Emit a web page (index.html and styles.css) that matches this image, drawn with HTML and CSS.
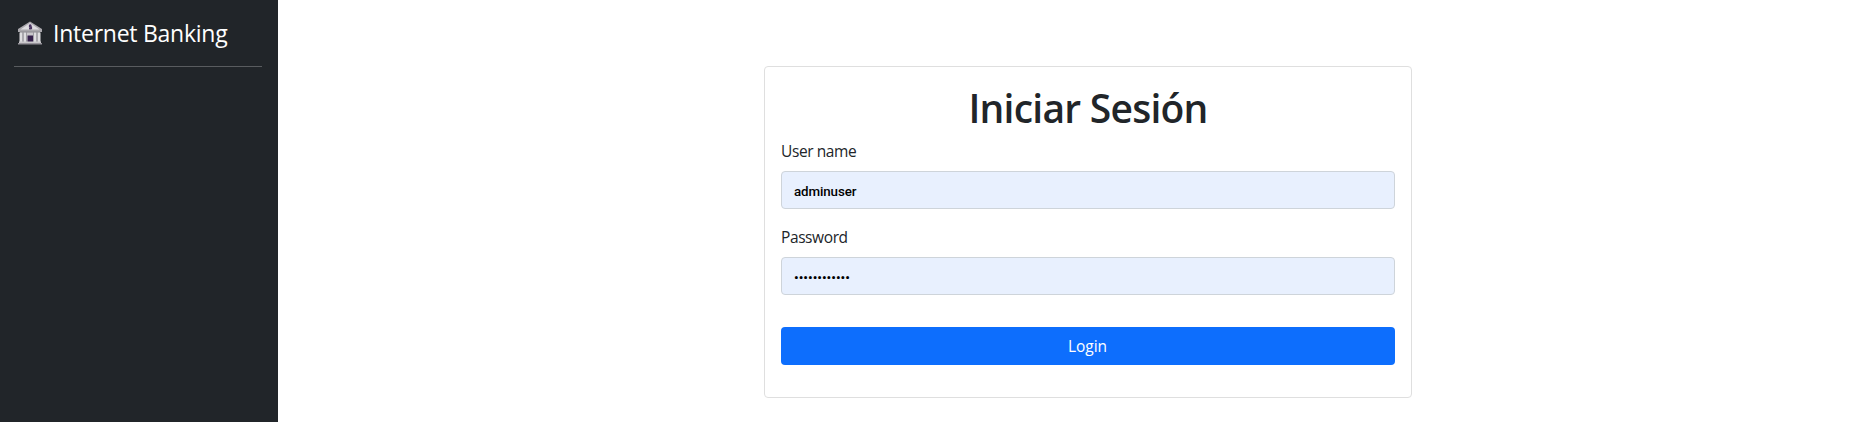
FILE: index.html
```html
<!DOCTYPE html>
<html lang="es">
<head>
<meta charset="utf-8">
<title>Internet Banking</title>
<link rel="stylesheet" href="styles.css">
</head>
<body>
<div class="layout">
  <aside class="sidebar">
    <a class="brand">
      <svg class="brand-icon" width="26" height="24" viewBox="0 0 26 24" aria-hidden="true">
        <path fill="#aaa8ad" d="M13 .5 25 8v3H1V8z"/>
        <path fill="#dedde0" d="M13 2 22.500 8.500h-19z"/>
        <path fill="#8b888f" d="M3 10.500h20v1.500H3z"/>
        <path fill="#77747c" d="M3 12h20v9H3z"/>
        <path fill="#dedde0" d="M2.500 11.500h3V21h-3zM6.500 11.500H9V21H6.500zM17 11.500h2.500V21H17zM20.500 11.500h3V21h-3z"/>
        <path fill="#c9c7cb" d="M9.500 11.500h7V21h-7z"/>
        <path fill="#35204b" d="M10.500 14.500h5.500V21h-5.500z"/>
        <path fill="#c9c7cb" d="M2 20.500h22V22H2z"/>
        <path fill="#96939a" d="M1 22h24v1.500H1z"/>
        <path fill="none" stroke="#4a3560" stroke-width="1.200" d="M14.500 4.300h-2v1.600h2v1.700h-2.500M13.200 3.300v5.200"/>
      </svg>
      <span class="brand-name">Internet Banking</span>
    </a>
    <hr class="divider">
  </aside>
  <main class="content">
    <form class="card">
      <h1 class="title">Iniciar Sesión</h1>
      <label class="label" for="user">User name</label>
      <input class="field" id="user" type="text" value="adminuser">
      <label class="label" for="pass">Password</label>
      <input class="field field-pass" id="pass" type="password" value="123456789012">
      <button class="submit" type="button"><span class="submit-text">Login</span></button>
    </form>
  </main>
</div>
</body>
</html>
```
FILE: styles.css
```css
* { box-sizing: border-box; }
body {
  margin: 0;
  background: #fff;
  color: #212529;
  font: 16px/24px "Segoe UI", "Open Sans", "Noto Sans", sans-serif;
}
.layout { display: flex; height: 422px; }
.sidebar {
  flex: 0 0 278px;
  padding: 16px 16px 16px 14px;
  background: #212529;
  color: #fff;
}
.brand { display: flex; align-items: center; height: 34px; padding-left: 3px; }
.brand-icon { flex: none; }
.brand-name { margin-left: 10px; font-size: 23px; letter-spacing: -0.25px; white-space: nowrap; }
.divider { height: 1px; margin: 16px 0; border: 0; background: #595c5f; }
.content { flex: 1; padding: 66px 0 0 486px; }
.card {
  display: flex;
  flex-direction: column;
  width: 648px;
  height: 332px;
  padding: 16px;
  border: 1px solid #dfdfdf;
  border-radius: 4px;
}
.title {
  height: 48px;
  margin: 0 0 8px;
  padding-top: 1px;
  font-size: 39px;
  font-weight: 600;
  line-height: 48px;
  text-align: center;
  letter-spacing: -0.75px;
}
.label { height: 24px; margin-bottom: 8px; font-size: 15.5px; letter-spacing: -0.4px; }
.field {
  width: 100%;
  height: 38px;
  margin: 0 0 16px;
  padding: 7px 12px 5px;
  border: 1px solid #ced4da;
  border-radius: 4px;
  background: #e8f0fe;
  color: #000;
  font: 500 13.333px Roboto, "Liberation Sans", sans-serif;
  letter-spacing: -0.1px;
}
.field-pass { margin-bottom: 32px; letter-spacing: 0; }
.submit {
  height: 38px;
  padding: 0 1px 0 0;
  border: 0;
  border-radius: 4px;
  background: #0d6efd;
  color: #fff;
  font: inherit;
  font-size: 15.5px;
}
```
